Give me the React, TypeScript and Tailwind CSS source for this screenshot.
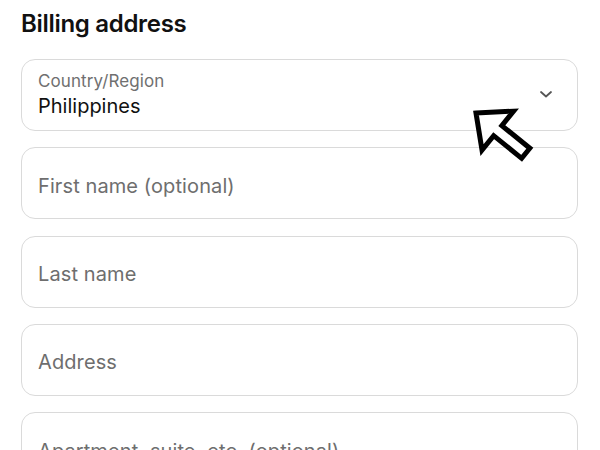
import React from 'react';

const fields = ['First name (optional)', 'Last name', 'Address', 'Apartment, suite, etc. (optional)'];

const App: React.FC = () => {
  return (
    <div className="relative h-[450px] w-[600px] overflow-hidden bg-white font-['Inter','Roboto',sans-serif] pl-[21px] pr-[22px]">
      <h2 className="pt-[9px] text-[24px] leading-[29px] font-semibold tracking-[-0.3px] text-[#111]">Billing address</h2>

      <div className="mt-[21px] flex flex-col gap-[16.3px]">
        {/* Country select */}
        <div className="relative h-[72px] rounded-[14px] border-[1.5px] border-[#dadada] px-[16px] pt-[10px]">
          <div className="text-[17px] leading-[23px] tracking-[0.1px] text-[#707070]">Country/Region</div>
          <div className="text-[20px] leading-[27px] text-[#111]">Philippines</div>
          <svg className="absolute right-[24px] top-[29px] h-[10px] w-[14px]" viewBox="0 0 14 10" fill="none">
            <path d="M2 3l5 4.5L12 3" stroke="#555" strokeWidth="1.8" strokeLinecap="round" strokeLinejoin="round" />
          </svg>
        </div>

        {fields.map((f) => (
          <div key={f} className="flex h-[72px] items-center rounded-[14px] border-[1.5px] border-[#dadada] px-[16px] pt-[5px]">
            <span className="text-[20px] tracking-[0.1px] text-[#6e6e6e]">{f}</span>
          </div>
        ))}
      </div>

      {/* annotation arrow */}
      <svg className="absolute left-[461px] top-[99px] h-[80px] w-[90px]" viewBox="0 0 90 80" fill="none">
        <g transform="translate(15 14) rotate(39)">
          <polygon points="0,0 28,-25 28,-6.5 64,-6.5 64,6.5 28,6.5 28,25" fill="white" stroke="black" strokeWidth="5" strokeLinejoin="miter" />
        </g>
      </svg>
    </div>
  );
};

export default App;
